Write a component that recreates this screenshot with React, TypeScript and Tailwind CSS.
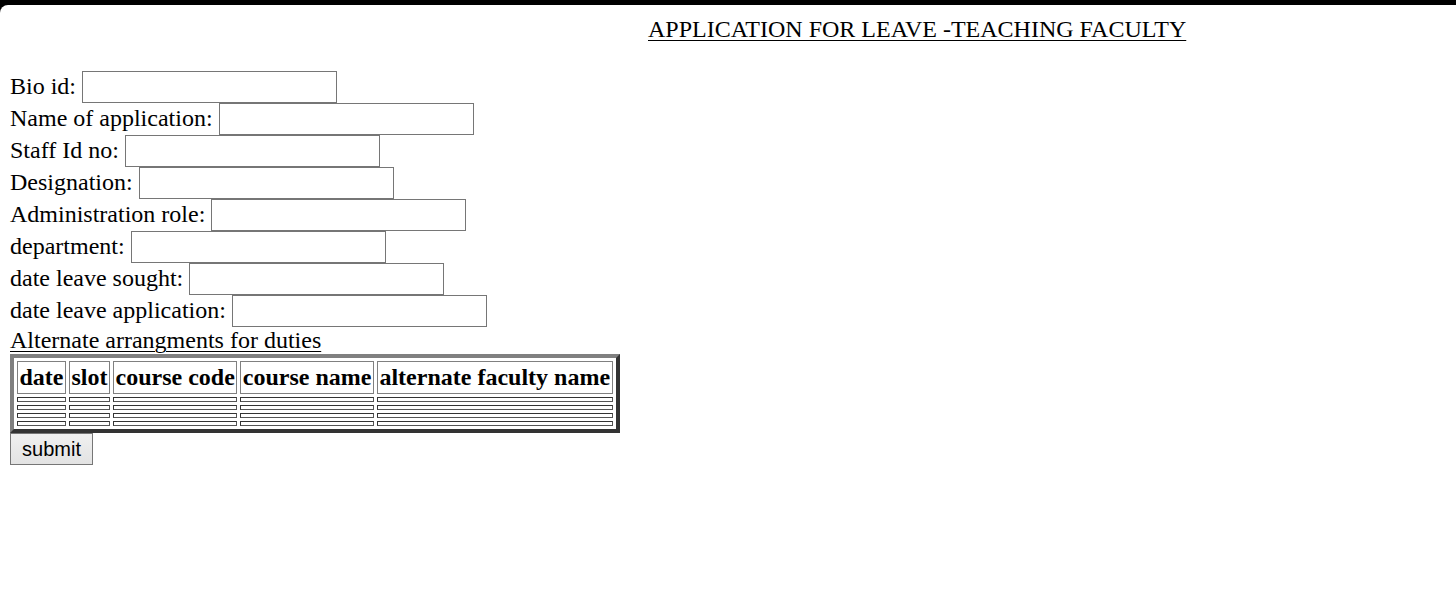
const fields = [
  "Bio id:",
  "Name of application:",
  "Staff Id no:",
  "Designation:",
  "Administration role:",
  "department:",
  "date leave sought:",
  "date leave application:",
];

const columns = ["date", "slot", "course code", "course name", "alternate faculty name"];

export default function App() {
  return (
    <div className="min-h-screen bg-black pt-[5px]">
      <div className="min-h-[590px] rounded-tl-lg bg-white px-[10px] font-['Liberation_Serif','Times_New_Roman',serif] text-[24px] text-black">
        {/* Title */}
        <div className="pl-[638px] pt-[11px] leading-[27px]">
          <span className="underline decoration-1 underline-offset-[3px]">
            APPLICATION FOR LEAVE -TEACHING FACULTY
          </span>
        </div>

        {/* Form fields */}
        <div className="mt-[28px] flex flex-col">
          {fields.map((label) => (
            <div key={label} className="flex h-8 items-center">
              <span className="-mt-px leading-[27px]">{label}</span>
              <input
                type="text"
                className="ml-[6px] h-8 w-[255px] border border-[#767676] bg-white px-1 text-[20px] outline-none"
              />
            </div>
          ))}
        </div>

        <div className="leading-[26px]">
          <span className="underline decoration-1 underline-offset-[3px]">
            Alternate arrangments for duties
          </span>
        </div>

        {/* Duties table */}
        <table className="mt-px border-separate border-spacing-[3px] border-4 border-t-[#808080] border-l-[#808080] border-r-[#333333] border-b-[#333333]">
          <thead>
            <tr>
              {columns.map((col) => (
                <th
                  key={col}
                  className="border border-[#808080] px-[1.5px] py-[2px] text-center font-bold leading-[27px] whitespace-nowrap"
                >
                  {col}
                </th>
              ))}
            </tr>
          </thead>
          <tbody>
            {[0, 1, 2, 3].map((r) => (
              <tr key={r}>
                {columns.map((col) => (
                  <td key={col} className="border border-t-[#333333] border-l-[#333333] border-r-[#555555] border-b-[#555555] p-0">
                    <div className="h-[3px]" />
                  </td>
                ))}
              </tr>
            ))}
          </tbody>
        </table>

        <button
          type="submit"
          className="block h-8 w-[83px] border border-[#767676] bg-gradient-to-b from-[#f0f0f0] to-[#e3e3e3] font-['Liberation_Sans',Arial,sans-serif] text-[20px] leading-none text-black"
        >
          submit
        </button>
      </div>
    </div>
  );
}
